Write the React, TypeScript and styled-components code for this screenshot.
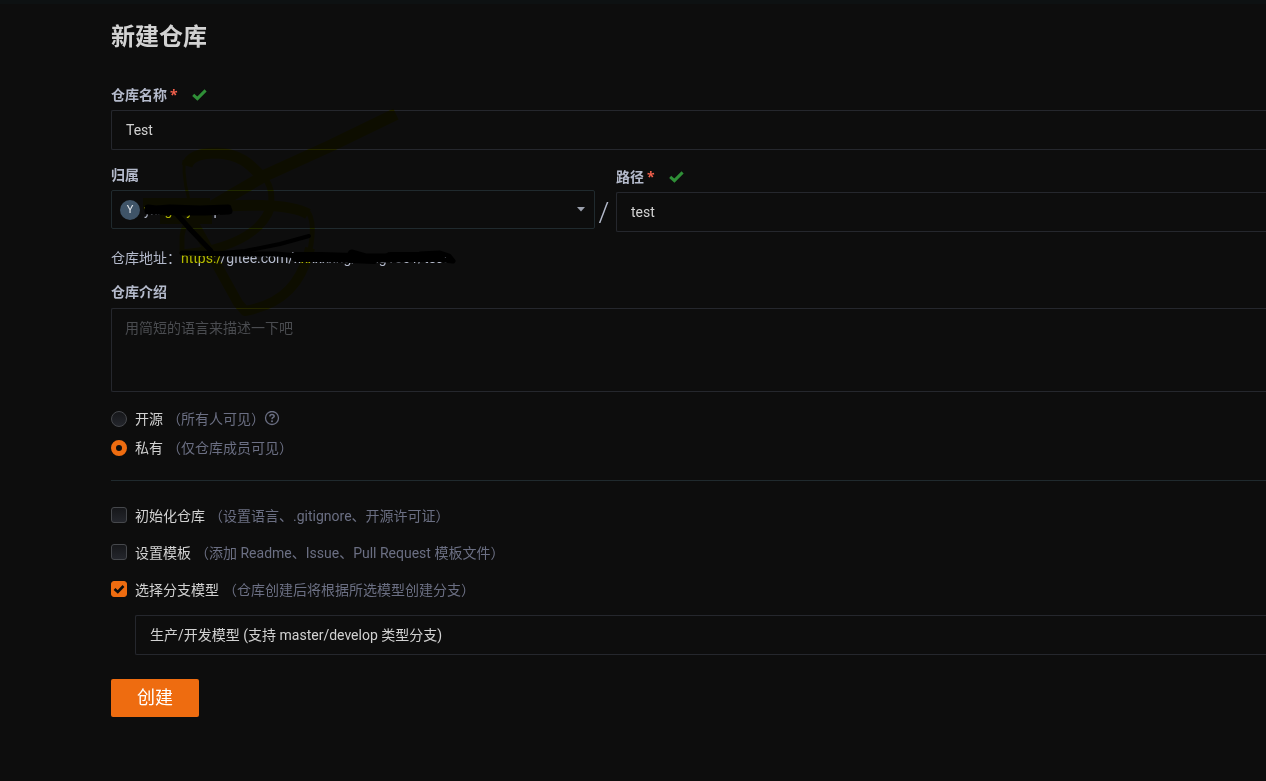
import React, { useState } from "react";
import styled, { createGlobalStyle } from "styled-components";

const GlobalStyle = createGlobalStyle`
  * { box-sizing: border-box; }
  body {
    margin: 0;
    background: #0d0d0d;
    color: #d2d2d2;
    font-family: Roboto, "Noto Sans CJK SC", sans-serif;
    font-size: 14px;
    line-height: 20px;
  }
  input, select, textarea, button { font: inherit; }
`;

const Page = styled.main`
  position: relative;
  min-height: 100vh;
  padding: 20px 0 62px 111px;
  border-top: 4px solid #0d1112;
  background: #0d0d0d;
  overflow: hidden;
`;

const Title = styled.h1`
  margin: 0 0 36px;
  font-size: 24px;
  line-height: 26px;
  font-weight: 700;
  color: #d2d2d2;
`;

const Field = styled.div`
  display: flex;
  flex-direction: column;
`;

const LabelRow = styled.div`
  display: flex;
  align-items: center;
  height: 18px;
  margin-bottom: 6px;
`;

const Label = styled.label`
  font-weight: 700;
  line-height: 18px;
  color: #b4bacb;
`;

const Required = styled.span`
  margin-left: 3px;
  font-family: "Open Sans", sans-serif;
  font-weight: 700;
  color: #f2604c;
`;

const control = `
  width: 100%;
  color: #d2d2d2;
  background: transparent;
  border: 1px solid #25272d;
  border-radius: 2px;
  outline: none;
`;

const TextInput = styled.input`
  ${control}
  height: 40px;
  padding: 0 14px;
  border-right: 0;
  border-radius: 2px 0 0 2px;
`;

const TextArea = styled.textarea`
  ${control}
  display: block;
  height: 84px;
  padding: 9px 13px;
  border-right: 0;
  border-radius: 2px 0 0 2px;
  resize: none;
  &::placeholder { color: #4a4c50; opacity: 1; }
`;

const Location = styled.div`
  display: flex;
  align-items: flex-start;
  margin-top: 16px;
`;

const Owner = styled(Field)`
  flex: 0 0 42%;
  max-width: 484px;
`;

const PathField = styled(Field)`
  flex: 1;
  margin-top: 2px;
`;

const Slash = styled.span`
  width: 21px;
  padding-right: 4px;
  margin-top: 30px;
  font-family: "Open Sans", sans-serif;
  font-size: 30px;
  font-weight: 300;
  line-height: 32px;
  text-align: center;
  color: #b4bacb;
`;

const Picker = styled.div`
  display: flex;
  align-items: center;
  height: 39px;
  padding: 0 8px;
  border: 1px solid #202a2e;
  border-radius: 2px;
`;

const Avatar = styled.span`
  flex: none;
  width: 20px;
  height: 20px;
  border-radius: 50%;
  background: #3f5468;
  color: #e0e4e8;
  font-size: 11px;
  line-height: 20px;
  text-align: center;
`;

const PickerSelect = styled.select`
  flex: 1;
  min-width: 0;
  padding: 0 0 0 4px;
  border: 0;
  outline: none;
  appearance: none;
  background: transparent;
  color: #b4bacb;
`;

const Address = styled.p`
  margin: 16px 0 15px;
  color: #b4bacb;
`;

const Intro = styled(Field)`
  gap: 1px;
`;

const Choices = styled.div`
  display: flex;
  flex-direction: column;
  gap: 9px;
  padding: 17px 0 22px;
  border-bottom: 1px solid #202a2e;
`;

const Options = styled.div`
  display: flex;
  flex-direction: column;
  gap: 17px;
  padding: 25px 0 15px;
`;

const Choice = styled.div`
  display: flex;
  align-items: center;
  height: 20px;
`;

const ChoiceLabel = styled.label`
  margin-left: 8px;
`;

const Hint = styled.span`
  margin-left: 4px;
  color: #6b6f83;
`;

const Radio = styled.input`
  appearance: none;
  width: 16px;
  height: 16px;
  margin: 0;
  border: 1px solid #46484c;
  border-radius: 50%;
  background: linear-gradient(#16171a, #24262c);
  &:checked {
    border: 5px solid #ee6c10;
    background: #0d0d0d;
  }
`;

const TickWrap = styled.span`
  display: grid;
  width: 16px;
  height: 16px;
  margin-bottom: 2px;
  > * { grid-area: 1 / 1; }
  svg { pointer-events: none; }
`;

const Tick = styled.input`
  appearance: none;
  width: 16px;
  height: 16px;
  margin: 0;
  border: 1px solid #46484c;
  border-radius: 3px;
  background: linear-gradient(#16171a, #24262c);
  &:checked {
    border-color: #ee6c10;
    background: #ee6c10;
  }
`;

const Model = styled.div`
  margin-left: 24px;
`;

const ModelSelect = styled.select`
  ${control}
  height: 40px;
  padding: 0 14px;
  border-right: 0;
  border-radius: 2px 0 0 2px;
  appearance: none;
`;

const Submit = styled.button`
  display: block;
  width: 88px;
  height: 38px;
  margin-top: 24px;
  padding: 0;
  border: 0;
  border-radius: 2px;
  background: #ee6c10;
  color: #fff;
  font-size: 18px;
  line-height: 38px;
`;

const Marks = styled.svg<{ $blend?: boolean }>`
  position: absolute;
  top: -4px;
  left: 0;
  pointer-events: none;
  mix-blend-mode: ${(p) => (p.$blend ? "multiply" : "normal")};
`;

const Icon = styled.svg<{ $gap: number }>`
  flex: none;
  margin-left: ${(p) => p.$gap}px;
`;

const Valid = () => (
  <Icon $gap={14} width="15" height="12" viewBox="0 0 15 12" aria-label="有效">
    <path d="M1.2 5.8 5.4 9.6 13.6 1.4" fill="none" stroke="#2f8f37" strokeWidth="3" />
  </Icon>
);

const Help = () => (
  <Icon $gap={-1} width="16" height="16" viewBox="0 0 16 16" aria-label="帮助">
    <circle cx="8" cy="7" r="6.5" fill="none" stroke="#6b6f83" strokeWidth="1.3" />
    <path d="M5.9 5.5C5.9 4.1 6.8 3.4 8 3.4S10.2 4.1 10.2 5.3C10.2 6.5 8 6.5 8 8.2" fill="none" stroke="#6b6f83" strokeWidth="1.5" />
    <circle cx="8" cy="10.2" r="1" fill="#6b6f83" />
  </Icon>
);

/* Translucent yellow pen strokes */
const Highlighter = () => (
  <Marks $blend width="480" height="330" viewBox="0 0 480 330" fill="none" stroke="#ffff00" strokeLinejoin="round" aria-hidden="true">
    <path d="M396 114 330 146 264 176 213 206" strokeWidth="12" />
    <path d="M187 166C190 155 205 153 217 153C240 154 250 164 261 176" strokeWidth="11" />
    <path d="M184 160C183 180 187 196 193 212" strokeWidth="3" />
    <path d="M261 174C272 184 272 196 271 206" strokeWidth="6" />
    <path d="M271 206C262 234 228 250 182 254" strokeWidth="9" />
    <path d="M182 254V236C183 226 189 218 197 206" strokeWidth="5" />
    <path d="M143 204H210" strokeWidth="12" />
    <path d="M160 218H212" strokeWidth="12" />
    <path d="M182 256H220" strokeWidth="14" />
    <path d="M200 208C240 204 290 203 308 214" strokeWidth="11" />
    <path d="M308 212C315 222 312 240 310 250" strokeWidth="5" />
    <path d="M310 248C302 282 284 304 245 311L238 303 192 220" strokeWidth="10" />
  </Marks>
);

/* Black marker strokes over the account name and the address */
const Marker = () => (
  <Marks width="480" height="330" viewBox="0 0 480 330" fill="none" stroke="#000" strokeLinecap="round" strokeLinejoin="round" aria-hidden="true">
    <path d="M148 208 156 209 170 208 200 209 228 208" strokeWidth="7" />
    <path d="M148 211 180 212 205 212 229 211" strokeWidth="7" />
    <path d="M174 211 190 229 211 251" strokeWidth="5" />
    <path d="M182 253 212 254 245 251 280 244 309 236" strokeWidth="4" />
    <path d="M182 253 230 254 275 254 300 256" strokeWidth="5" />
    <path d="M296 257 320 257 352 258" strokeWidth="10" />
    <path d="M352 254 366 258 382 258 400 258" strokeWidth="9" />
    <path d="M350 260 374 261" strokeWidth="6" />
    <path d="M390 257 412 257 440 257" strokeWidth="10" />
    <path d="M420 254 440 253 449 256 453 261 442 260" strokeWidth="5" />
  </Marks>
);

const options = [
  { id: "init", label: "初始化仓库", hint: "（设置语言、.gitignore、开源许可证）" },
  { id: "template", label: "设置模板", hint: "（添加 Readme、Issue、Pull Request 模板文件）" },
  { id: "branch", label: "选择分支模型", hint: "（仓库创建后将根据所选模型创建分支）" },
];

export default function App() {
  const [visibility, setVisibility] = useState("private");
  const [picked, setPicked] = useState<string[]>(["branch"]);
  const toggle = (id: string) =>
    setPicked((p) => (p.includes(id) ? p.filter((x) => x !== id) : [...p, id]));

  return (
    <Page>
      <GlobalStyle />
      <Title>新建仓库</Title>
      <Field>
        <LabelRow>
          <Label htmlFor="name">仓库名称</Label>
          <Required>*</Required>
          <Valid />
        </LabelRow>
        <TextInput id="name" defaultValue="Test" />
      </Field>
      <Location>
        <Owner>
          <LabelRow>
            <Label htmlFor="owner">归属</Label>
          </LabelRow>
          <Picker>
            <Avatar>Y</Avatar>
            <PickerSelect id="owner">
              <option>yxxgxxyxxxp</option>
            </PickerSelect>
            <svg width="10" height="5" viewBox="0 0 10 5">
              <path d="M1 0H9L5 4.5Z" fill="#9ba0ad" />
            </svg>
          </Picker>
        </Owner>
        <Slash>/</Slash>
        <PathField>
          <LabelRow>
            <Label htmlFor="path">路径</Label>
            <Required>*</Required>
            <Valid />
          </LabelRow>
          <TextInput id="path" defaultValue="test" />
        </PathField>
      </Location>
      <Address>仓库地址：https://gitee.com/xxxxxxng/xxng1001/test</Address>
      <Intro>
        <LabelRow>
          <Label htmlFor="intro">仓库介绍</Label>
        </LabelRow>
        <TextArea id="intro" placeholder="用简短的语言来描述一下吧" />
      </Intro>
      <Choices>
        <Choice>
          <Radio type="radio" id="public" name="visibility" checked={visibility === "public"} onChange={() => setVisibility("public")} />
          <ChoiceLabel htmlFor="public">开源</ChoiceLabel>
          <Hint>（所有人可见）</Hint>
          <Help />
        </Choice>
        <Choice>
          <Radio type="radio" id="private" name="visibility" checked={visibility === "private"} onChange={() => setVisibility("private")} />
          <ChoiceLabel htmlFor="private">私有</ChoiceLabel>
          <Hint>（仅仓库成员可见）</Hint>
        </Choice>
      </Choices>
      <Options>
        {options.map((o) => (
          <Choice key={o.id}>
            <TickWrap>
              <Tick type="checkbox" id={o.id} checked={picked.includes(o.id)} onChange={() => toggle(o.id)} />
              {picked.includes(o.id) && (
                <svg width="16" height="16" viewBox="0 0 16 16">
                  <path d="M3.5 8 6.8 11 12.5 5" fill="none" stroke="#0d0d0d" strokeWidth="2.6" />
                </svg>
              )}
            </TickWrap>
            <ChoiceLabel htmlFor={o.id}>{o.label}</ChoiceLabel>
            <Hint>{o.hint}</Hint>
          </Choice>
        ))}
      </Options>
      <Model>
        <ModelSelect aria-label="分支模型">
          <option>生产/开发模型 (支持 master/develop 类型分支)</option>
        </ModelSelect>
      </Model>
      <Submit type="button">创建</Submit>
      <Highlighter />
      <Marker />
    </Page>
  );
}
